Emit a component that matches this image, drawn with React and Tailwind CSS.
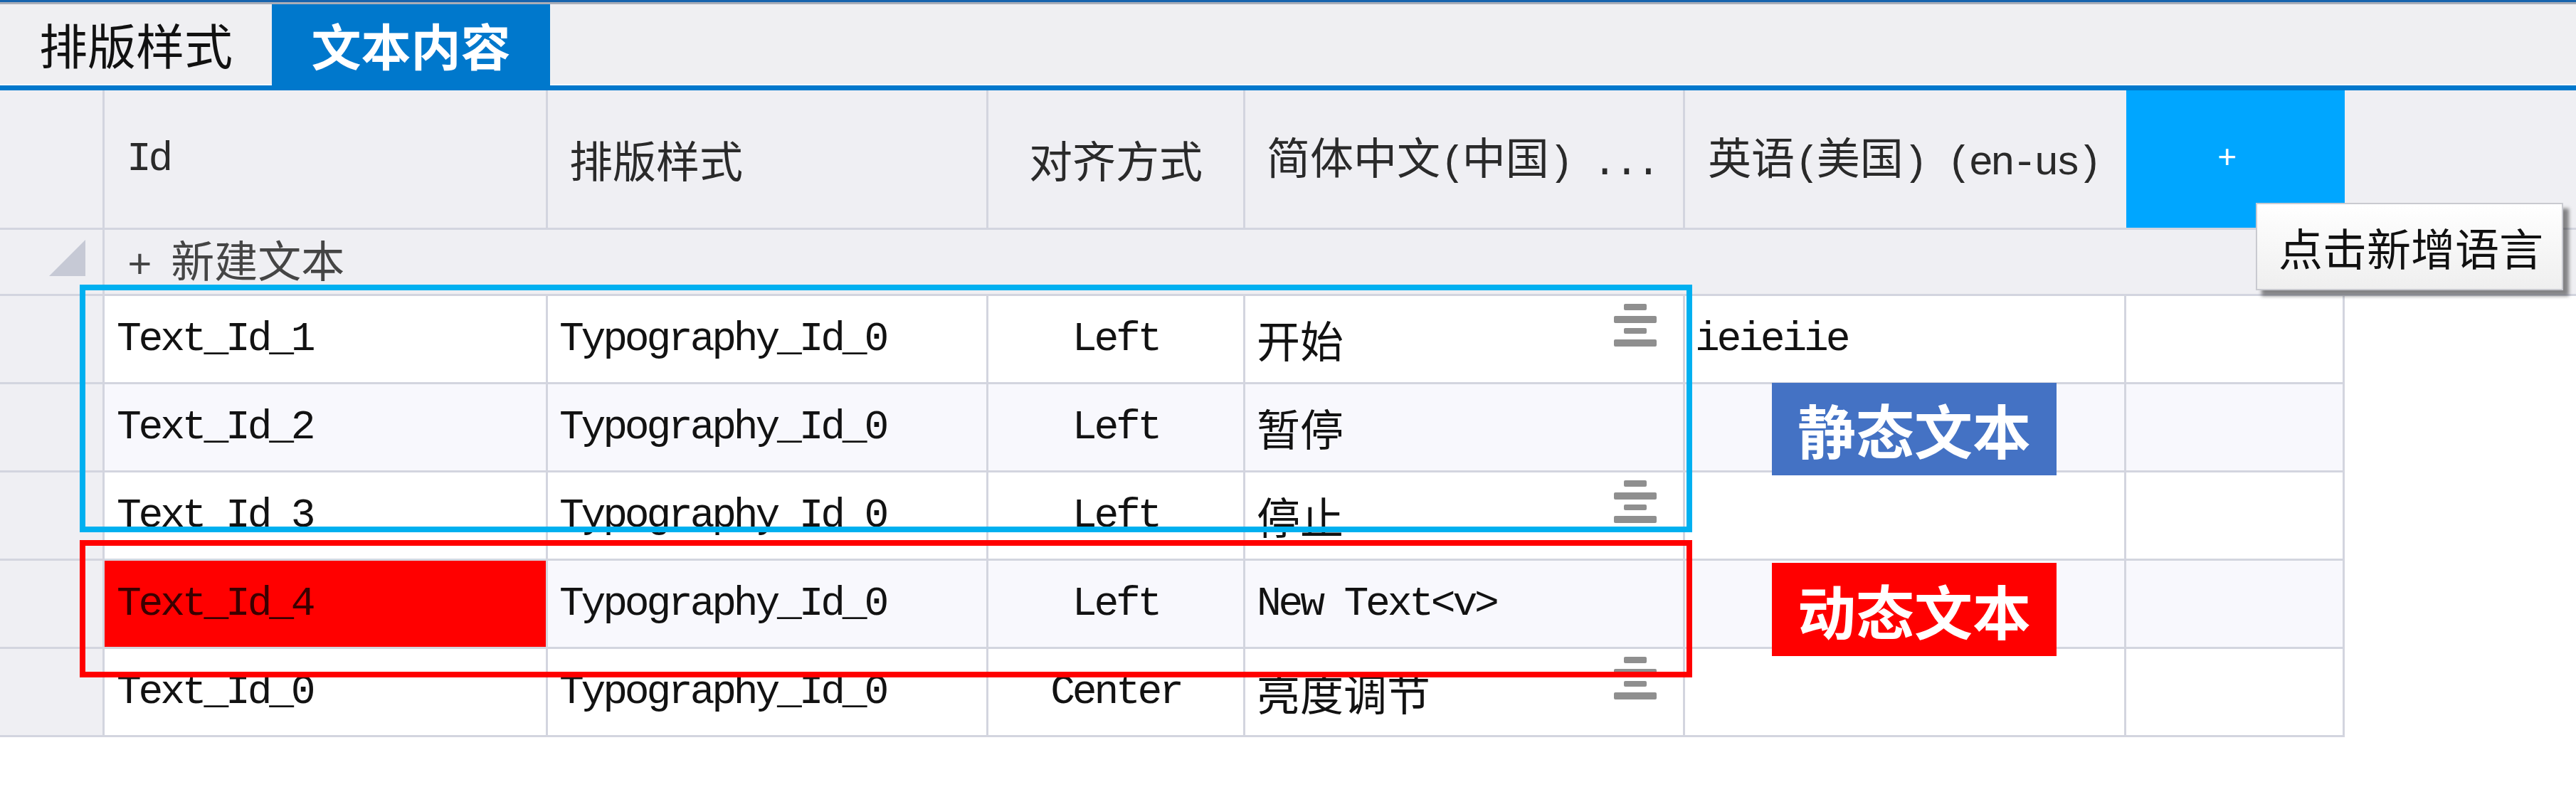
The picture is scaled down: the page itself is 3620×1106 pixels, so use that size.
import React from "react";

const CJK_RE = /([\u2E80-\u9FFF\u3000-\u303F\uFF00-\uFFEF]+)/;

function Mix({ text }) {
  const parts = text.split(CJK_RE).filter((p) => p !== "");
  return (
    <span className="whitespace-pre leading-none">
      {parts.map((p, i) =>
        CJK_RE.test(p) ? (
          <span key={i} className="font-['Noto_Sans_CJK_SC','Noto_Sans',sans-serif] text-[61px] leading-none">
            {p}
          </span>
        ) : (
          <span key={i} className="font-['Liberation_Mono',monospace] text-[58px] leading-none tracking-[-4.2px]">
            {p}
          </span>
        )
      )}
    </span>
  );
}

function AlignIcon() {
  return (
    <svg width="60" height="60" viewBox="0 0 60 60" className="shrink-0">
      <rect x="14" y="0" width="32" height="9" rx="2" fill="#8f8f8f" />
      <rect x="0" y="17" width="60" height="10" rx="2" fill="#8f8f8f" />
      <rect x="14" y="34" width="32" height="8" rx="2" fill="#8f8f8f" />
      <rect x="0" y="50" width="60" height="10" rx="2" fill="#8f8f8f" />
    </svg>
  );
}

const rows = [
  { id: "Text_Id_1", ty: "Typography_Id_0", al: "Left", zh: "开始", en: "ieieiie", icon: true, alt: false },
  { id: "Text_Id_2", ty: "Typography_Id_0", al: "Left", zh: "暂停", en: "", icon: false, alt: true },
  { id: "Text_Id_3", ty: "Typography_Id_0", al: "Left", zh: "停止", en: "", icon: true, alt: false },
  { id: "Text_Id_4", ty: "Typography_Id_0", al: "Left", zh: "New Text<v>", en: "", icon: false, alt: true, red: true },
  { id: "Text_Id_0", ty: "Typography_Id_0", al: "Center", zh: "亮度调节", en: "", icon: true, alt: false },
];

export default function App() {
  return (
    <div className="relative w-[3620px] h-[1106px] overflow-hidden bg-white text-[#121212]">
      {/* top lines */}
      <div className="h-[3px] bg-[#1763ad]" />
      <div className="h-[3px] bg-[#a9adb8]" />

      {/* tab bar */}
      <div className="flex h-[114px] bg-[#efeff2]">
        <div className="flex w-[382px] items-center justify-center border-b-2 border-white">
          <span className="font-['Noto_Sans_CJK_SC',sans-serif] text-[68px] leading-none text-[#111]">排版样式</span>
        </div>
        <div className="flex w-[391px] items-center justify-center bg-[#0078cc]">
          <span className="font-['Noto_Sans_CJK_SC',sans-serif] text-[70px] font-bold leading-none text-white">文本内容</span>
        </div>
        <div className="flex-1 border-b-2 border-white" />
      </div>
      <div className="h-[7px] bg-[#0078cc]" />

      {/* header row */}
      <div className="grid h-[196px] grid-cols-[147px_623px_619px_361px_618px_620px_307px_1fr] bg-[#efeff3]">
        <div className="border-r-[3px] border-b-[3px] border-[#d3d5df]" />
        <div className="flex items-center border-r-[3px] border-b-[3px] border-[#d3d5df] pl-[31px] text-[#2a2a2a]">
          <Mix text="Id" />
        </div>
        <div className="flex items-center border-r-[3px] border-b-[3px] border-[#d3d5df] pl-[30px] text-[#2a2a2a]">
          <Mix text="排版样式" />
        </div>
        <div className="flex items-center justify-center border-r-[3px] border-b-[3px] border-[#d3d5df] text-[#2a2a2a]">
          <Mix text="对齐方式" />
        </div>
        <div className="flex items-center border-r-[3px] border-b-[3px] border-[#d3d5df] pl-[30px] text-[#2a2a2a]">
          <Mix text="简体中文(中国) ..." />
        </div>
        <div className="flex items-center border-b-[3px] border-[#d3d5df] pl-[32px] text-[#2a2a2a]">
          <Mix text="英语(美国) (en-us)" />
        </div>
        <div className="flex items-center justify-center border-b-[3px] border-[#d3d5df] bg-[#00a6ff] pr-[24px]">
          <span className="font-['Liberation_Mono',monospace] text-[46px] leading-none text-white">+</span>
        </div>
        <div className="border-b-[3px] border-[#d3d5df]" />
      </div>

      {/* new text row */}
      <div className="grid h-[93px] grid-cols-[147px_1fr] bg-[#efeff3]">
        <div className="flex items-end justify-end border-r-[3px] border-b-[3px] border-[#d3d5df] pr-[24px] pb-[25px]">
          <svg width="51" height="51" viewBox="0 0 51 51">
            <polygon points="0,51 51,0 51,51" fill="#c6c9d5" />
          </svg>
        </div>
        <div className="flex items-center border-b-[3px] border-[#d3d5df] pl-[32px] text-[#454545]">
          <Mix text="+ 新建文本" />
        </div>
      </div>

      {/* data rows */}
      {rows.map((r) => {
        const bg = r.alt ? "bg-[#f8f8fd]" : "bg-white";
        return (
          <div key={r.id} className="grid h-[124px] grid-cols-[147px_623px_619px_361px_618px_620px_307px_1fr]">
            <div className="border-r-[3px] border-b-[3px] border-[#d3d5df] bg-[#efeff3]" />
            <div
              className={
                r.red
                  ? "flex items-center border-r-[3px] border-b-[3px] border-[#d3d5df] bg-[#ff0000] pl-[17px] text-[#3a0000]"
                  : `flex items-center border-r-[3px] border-b-[3px] border-[#d3d5df] pl-[17px] ${bg}`
              }
            >
              <Mix text={r.id} />
            </div>
            <div className={`flex items-center border-r-[3px] border-b-[3px] border-[#d3d5df] pl-[16px] ${bg}`}>
              <Mix text={r.ty} />
            </div>
            <div className={`flex items-center justify-center border-r-[3px] border-b-[3px] border-[#d3d5df] ${bg}`}>
              <Mix text={r.al} />
            </div>
            <div className={`flex justify-between border-r-[3px] border-b-[3px] border-[#d3d5df] pl-[16px] ${bg}`}>
              <div className="flex items-center">
                <Mix text={r.zh} />
              </div>
              {r.icon ? (
                <div className="mt-[11px] mr-[37px]">
                  <AlignIcon />
                </div>
              ) : null}
            </div>
            <div className={`flex items-center border-r-[3px] border-b-[3px] border-[#d3d5df] pl-[14px] ${bg}`}>
              {r.en ? <Mix text={r.en} /> : null}
            </div>
            <div className={`border-r-[3px] border-b-[3px] border-[#d3d5df] ${bg}`} />
            <div className="bg-white" />
          </div>
        );
      })}

      {/* annotation overlays */}
      <div className="pointer-events-none absolute left-[112px] top-[400px] h-[348px] w-[2266px] border-[8px] border-[#00b0f0]" />
      <div className="pointer-events-none absolute left-[112px] top-[759px] h-[193px] w-[2266px] border-[8px] border-[#ff0000]" />

      <div className="absolute left-[2490px] top-[538px] flex h-[130px] w-[400px] items-center justify-center bg-[#4472c4]">
        <span className="font-['Noto_Sans_CJK_SC',sans-serif] text-[82px] font-bold leading-none text-white">静态文本</span>
      </div>
      <div className="absolute left-[2490px] top-[791px] flex h-[131px] w-[400px] items-center justify-center bg-[#ff0000]">
        <span className="font-['Noto_Sans_CJK_SC',sans-serif] text-[82px] font-bold leading-none text-white">动态文本</span>
      </div>

      {/* tooltip */}
      <div className="absolute left-[3170px] top-[285px] flex h-[123px] w-[432px] items-center border-2 border-[#c9cad0] bg-linear-to-b from-white to-[#efefef] pl-[30px] shadow-[8px_8px_5px_rgba(0,0,0,0.45)]">
        <span className="font-['Noto_Sans_CJK_SC',sans-serif] text-[62px] leading-none text-[#111]">点击新增语言</span>
      </div>
    </div>
  );
}
